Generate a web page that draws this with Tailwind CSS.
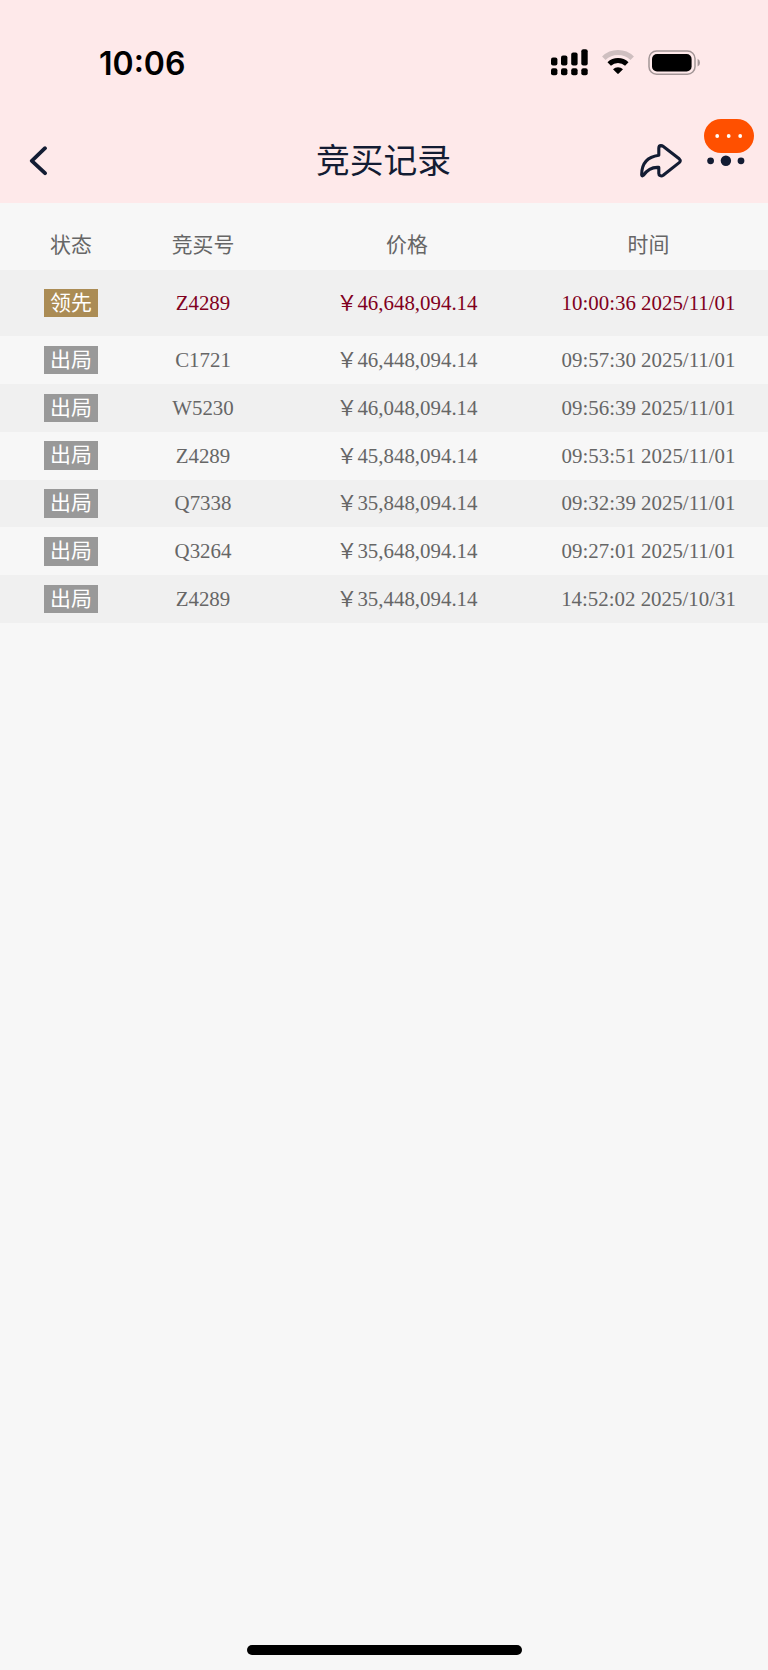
<!DOCTYPE html>
<html lang="zh-CN">
<head>
    <meta charset="UTF-8">
    <meta name="viewport" content="width=device-width, initial-scale=1.0">
    <title>竞买记录</title>
    <script src="https://cdn.jsdelivr.net/npm/@tailwindcss/browser@4"></script>
</head>
<body class="bg-[#f7f7f7]">

    <div class="min-h-screen flex flex-col font-['Liberation_Serif','Noto_Sans_CJK_SC',serif]">
        <header class="h-[203px] bg-[#fee9ea]">
            <!-- Status bar -->
            <div class="h-[118px] pt-[7px] pl-[99px] pr-[67px] flex items-center justify-between">
                <span class="pt-[2px] font-['Inter',sans-serif] text-[32px] font-semibold text-black">10:06</span>
                <div class="pb-[2px] flex items-center">
                    <!-- Dual SIM signal -->
                    <svg class="w-[38px] h-[28px]" viewBox="0 0 38 28" fill="#000">
                        <rect x="0" y="9.5" width="6.4" height="8" rx="2"/>
                        <rect x="10" y="7.5" width="6.4" height="10" rx="2"/>
                        <rect x="20.2" y="4.5" width="6.4" height="13" rx="2"/>
                        <rect x="30.3" y="1.3" width="6.4" height="16.2" rx="2"/>
                        <rect x="0" y="20.3" width="6.4" height="7" rx="2"/>
                        <rect x="10" y="20.3" width="6.4" height="7" rx="2"/>
                        <rect x="20.2" y="20.3" width="6.4" height="7" rx="2"/>
                        <rect x="30.3" y="20.3" width="6.4" height="7" rx="2"/>
                    </svg>
                    <!-- Wifi -->
                    <svg class="ml-[13px] w-[32px] h-[28px]" viewBox="0 0 32 28" fill="none">
                        <path d="M1.8 10.2a20.5 20.5 0 0 1 28.4 0" stroke="#cfbfc0" stroke-width="5"/>
                        <path d="M7.2 16a12.8 12.8 0 0 1 17.6 0" stroke="#000" stroke-width="5"/>
                        <path d="M11 21.3a7.4 7.4 0 0 1 10 0l-4.3 4.3q-.7.7-1.4 0z" fill="#000"/>
                    </svg>
                    <!-- Battery -->
                    <svg class="ml-[14px] w-[53px] h-[28px]" viewBox="0 0 53 28" fill="none">
                        <rect x="1" y="3" width="46" height="23.3" rx="7.6" stroke="#a39697" stroke-width="1.5"/>
                        <rect x="4" y="6" width="39.6" height="17.4" rx="5" fill="#000"/>
                        <path d="M49.6 10.8q2.4 1.1 2.4 3.9t-2.4 3.9z" fill="#a39697"/>
                    </svg>
                </div>
            </div>

            <!-- Nav bar -->
            <div class="h-[85px] pl-[29px] pr-[22px] grid grid-cols-[1fr_auto_1fr] items-center text-[#131c33]">
                <svg class="w-[19px] h-[30px]" viewBox="0 0 19 30" fill="none" stroke="currentColor" stroke-width="3.8" stroke-linecap="round" stroke-linejoin="round">
                    <path d="M16 2.2 2.8 14.8 16 27.2"/>
                </svg>
                <h1 class="-ml-[8px] pb-[3px] text-[33.8px] leading-[50px] font-['Noto_Sans_CJK_SC',sans-serif]">竞买记录</h1>
                <div class="flex items-center justify-end">
                    <svg class="w-[42px] h-[34px]" viewBox="0 0 42 34" fill="none" stroke="currentColor" stroke-width="3.1" stroke-linejoin="round">
                        <path d="M18.8 11.2V4.2Q18.8 1.7 21 1.6q1.2 0 2 .6L39.2 14.8q2.2 1.9 0 3.8L23.2 31.2q-1.6 1.2-3 .5Q18.8 31 18.8 29.4V23.4Q9.4 22.6 3.6 31.2 2 32.6 1.7 31 1.4 13.6 18.8 11.2z"/>
                    </svg>
                    <div class="relative ml-[24px] w-[40px] h-[12px]">
                        <svg class="w-[40px] h-[12px]" viewBox="0 0 40 12" fill="currentColor">
                            <circle cx="4.6" cy="5.8" r="3.4"/>
                            <circle cx="19.9" cy="5.8" r="5.2"/>
                            <circle cx="35" cy="5.8" r="3.4"/>
                        </svg>
                        <div class="absolute -left-[2px] -top-[36px] w-[50.4px] h-[34.3px] rounded-[17px] bg-[#ff5000] flex items-center justify-center">
                            <svg class="w-[28px] h-[4px]" viewBox="0 0 28 4" fill="#fff">
                                <circle cx="2.2" cy="2" r="1.9"/>
                                <circle cx="13.7" cy="2" r="1.9"/>
                                <circle cx="25.2" cy="2" r="1.9"/>
                            </svg>
                        </div>
                    </div>
                </div>
            </div>
        </header>

        <main class="flex-1 text-[20.9px] leading-[28px] text-[#666]">
            <div class="h-[66.6px] pt-[18px] grid grid-cols-[142px_122px_286px_197px] items-center text-center">
                <span>状态</span>
                <span>竞买号</span>
                <span>价格</span>
                <span>时间</span>
            </div>
            <div id="records">
                <!-- Rows will be populated by JavaScript -->
            </div>
        </main>

        <!-- Home indicator -->
        <div class="h-[25px] flex justify-center">
            <div class="w-[275px] h-[10px] rounded-full bg-black"></div>
        </div>
    </div>

    <script>
        const records = [
            { bidder: 'Z4289', price: '46,648,094.14', time: '10:00:36 2025/11/01', leading: true },
            { bidder: 'C1721', price: '46,448,094.14', time: '09:57:30 2025/11/01' },
            { bidder: 'W5230', price: '46,048,094.14', time: '09:56:39 2025/11/01' },
            { bidder: 'Z4289', price: '45,848,094.14', time: '09:53:51 2025/11/01' },
            { bidder: 'Q7338', price: '35,848,094.14', time: '09:32:39 2025/11/01' },
            { bidder: 'Q3264', price: '35,648,094.14', time: '09:27:01 2025/11/01' },
            { bidder: 'Z4289', price: '35,448,094.14', time: '14:52:02 2025/10/31' },
        ];

        document.getElementById('records').innerHTML = records.map((r, i) => `
            <div class="${r.leading ? 'h-[66.6px] text-[#800020]' : 'h-[47.8px]'} ${i % 2 === 0 ? 'bg-[#f0f0f0]' : ''} grid grid-cols-[142px_122px_286px_197px] items-center text-center">
                <span class="justify-self-center w-[54px] h-[28.5px] leading-[28px] text-white ${r.leading ? 'bg-[#ab8c55]' : 'bg-[#999]'}">${r.leading ? '领先' : '出局'}</span>
                <span>${r.bidder}</span>
                <span>￥${r.price}</span>
                <span class="whitespace-nowrap">${r.time}</span>
            </div>`).join('');
    </script>

</body>
</html>
